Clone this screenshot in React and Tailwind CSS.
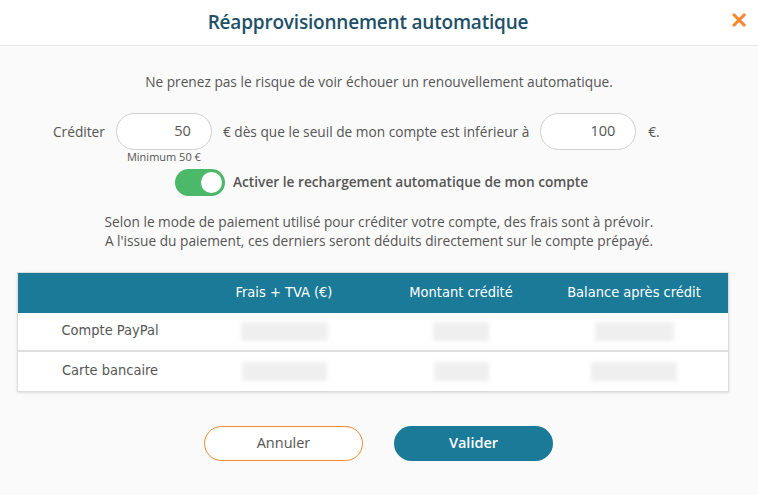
import React from "react";

function Blur({ w }) {
  return <div className={`h-[19px] mx-auto bg-[#efefef] blur-[2px] ${w}`} />;
}

const rows = [
  { label: "Compte PayPal", a: "w-[87px]", b: "w-[56px]", c: "w-[79px]" },
  { label: "Carte bancaire", a: "w-[85px]", b: "w-[55px]", c: "w-[86px]" },
];

const cols = "grid grid-cols-[184px_164px_190px_156px_1fr] items-center text-center";

export default function App() {
  return (
    <div className="w-[758px] h-[495px] bg-[#fafafa] font-['Open_Sans','Noto_Sans',sans-serif] text-[#555] overflow-hidden">
      {/* Header */}
      <div className="relative h-[46px] bg-white border-b border-[#e6e6e6] flex items-center justify-center pr-[22px]">
        <h1 className="text-[19px] text-[#1d5068] font-semibold tracking-[-0.2px]">Réapprovisionnement automatique</h1>
        <span className="absolute right-[10px] top-[8px] text-[#f7882f] text-[22px] font-bold leading-none">✕</span>
      </div>

      <p className="text-center text-[13.7px] mt-[26px]">Ne prenez pas le risque de voir échouer un renouvellement automatique.</p>

      {/* Amount row */}
      <div className="flex items-start mt-[20px] pl-[53px] text-[13.7px]">
        <span className="mt-[9px]">Créditer</span>
        <div className="ml-[11px] flex flex-col items-center">
          <div className="w-[96px] h-[37px] rounded-full border border-[#cfcfcf] bg-white flex items-center justify-end pr-[20px] text-[14.5px]">50</div>
          <span className="text-[11px] mt-[1px] leading-none">Minimum 50 €</span>
        </div>
        <span className="ml-[11px] mt-[9px]">€ dès que le seuil de mon compte est inférieur à</span>
        <div className="ml-[11px] w-[96px] h-[37px] rounded-full border border-[#cfcfcf] bg-white flex items-center justify-end pr-[20px] text-[14.5px]">100</div>
        <span className="ml-[12px] mt-[9px]">€.</span>
      </div>

      {/* Toggle */}
      <div className="flex items-center mt-[7px] pl-[175px]">
        <div className="w-[50px] h-[27px] rounded-full bg-[#4cb86a] flex items-center justify-end pr-[3px]">
          <div className="w-[21px] h-[21px] rounded-full bg-white" />
        </div>
        <span className="ml-[8px] text-[13.7px] font-semibold">Activer le rechargement automatique de mon compte</span>
      </div>

      <div className="text-center text-[13.7px] leading-[19px] mt-[16px]">
        <p>Selon le mode de paiement utilisé pour créditer votre compte, des frais sont à prévoir.</p>
        <p>A l'issue du paiement, ces derniers seront déduits directement sur le compte prépayé.</p>
      </div>

      {/* Table */}
      <div className="mx-[17px] w-[712px] mt-[22px] bg-white border border-[#dcdcdc] shadow-[0_1px_2px_rgba(0,0,0,0.12)] font-['Liberation_Sans_Narrow','DejaVu_Sans',sans-serif] font-stretch-condensed text-[14.5px]">
        <div className={`h-[40px] bg-[#1a7a98] text-white ${cols}`}>
          <span />
          <span>Frais + TVA (€)</span>
          <span>Montant crédité</span>
          <span>Balance après crédit</span>
        </div>
        {rows.map((r, i) => (
          <div
            key={r.label}
            className={`h-[39px] text-[#555] ${cols} ${i === 0 ? "border-b-2 border-[#dedede]" : ""}`}
          >
            <span>{r.label}</span>
            <Blur w={r.a} />
            <Blur w={r.b} />
            <Blur w={r.c} />
          </div>
        ))}
      </div>

      {/* Buttons */}
      <div className="flex justify-center gap-[31px] mt-[34px] pr-[1px] text-[14.5px]">
        <button className="w-[159px] h-[35px] rounded-full border border-[#f7882f] bg-white text-[#555]">Annuler</button>
        <button className="w-[159px] h-[35px] rounded-full bg-[#1a7a98] text-white font-semibold">Valider</button>
      </div>
    </div>
  );
}
